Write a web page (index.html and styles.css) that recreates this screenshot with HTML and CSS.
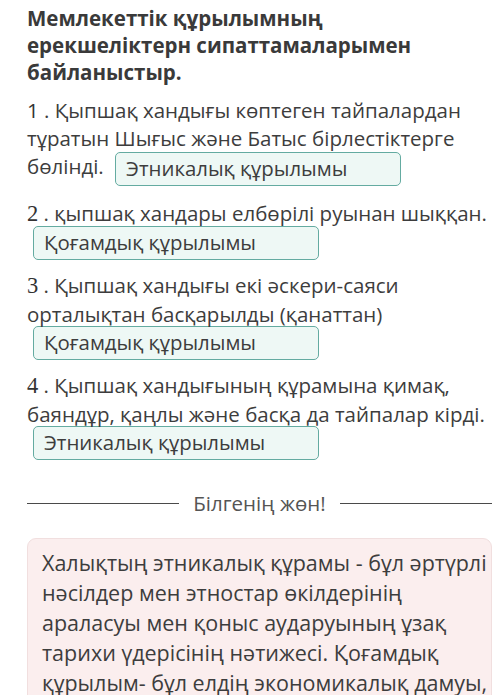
FILE: index.html
```html
<!DOCTYPE html>
<html lang="kk">
<head>
<meta charset="utf-8">
<title>Мемлекеттік құрылым</title>
<link rel="stylesheet" href="styles.css">
</head>
<body>
<main class="page">
  <h1 class="title">Мемлекеттік құрылымның ерекшеліктерн сипаттамаларымен байланыстыр.</h1>

  <p class="item"><span class="num num-sans">1</span> . Қыпшақ хандығы көптеген тайпалардан тұратын Шығыс және Батыс бірлестіктерге бөлінді. <span class="answer answer-inline">Этникалық құрылымы</span></p>

  <div class="item">
    <p class="item-text nowrap"><span class="num">2</span> . қыпшақ хандары елбөрілі руынан шыққан.</p>
    <span class="answer">Қоғамдық құрылымы</span>
  </div>

  <div class="item">
    <p class="item-text"><span class="num">3</span> . Қыпшақ хандығы екі әскери-саяси орталықтан басқарылды (қанаттан)</p>
    <span class="answer">Қоғамдық құрылымы</span>
  </div>

  <div class="item">
    <p class="item-text"><span class="num">4</span> . Қыпшақ хандығының құрамына қимақ, баяндұр, қаңлы және басқа да тайпалар кірді.</p>
    <span class="answer">Этникалық құрылымы</span>
  </div>

  <div class="divider">
    <span class="divider-line"></span>
    <span class="divider-text">Білгенің жөн!</span>
    <span class="divider-line"></span>
  </div>

  <div class="note">
    Халықтың этникалық құрамы - бұл әртүрлі<br>
    нәсілдер мен этностар өкілдерінің<br>
    араласуы мен қоныс аударуының ұзақ<br>
    тарихи үдерісінің нәтижесі. Қоғамдық<br>
    құрылым- бұл елдің экономикалық дамуы,<br>
    әлеуметтік топтары мен таптарының арақатынасы.
  </div>
</main>
</body>
</html>
```

FILE: styles.css
```css
html, body {
  margin: 0;
  padding: 0;
  background: #ffffff;
}

body {
  font-family: "Open Sans", "Noto Sans", "DejaVu Sans", sans-serif;
  color: #3d3d3d;
  overflow: hidden;
}

.page {
  padding: 5px 8px 0 27px;
  width: 500px;
  box-sizing: border-box;
}

.title {
  margin: 0 0 10px 0;
  font-size: 20.5px;
  line-height: 27px;
  font-weight: 700;
  color: #3a3a3a;
  padding-right: 20px;
}

.item {
  margin: 0 0 11px 0;
  font-size: 20.5px;
  line-height: 28px;
}

p.item {
  margin-bottom: 13px;
}

.item-text {
  margin: 0;
}

.nowrap {
  white-space: nowrap;
}

.num {
  font-family: "Liberation Serif", "DejaVu Serif", serif;
  font-size: 22.5px;
  color: #333;
}

.num-sans {
  font-family: "Open Sans", sans-serif;
  font-size: 20.5px;
}

.answer {
  display: block;
  box-sizing: border-box;
  width: 286px;
  height: 34px;
  margin: -2px 0 0 6px;
  padding: 0 0 0 10px;
  background: #eef8f5;
  border: 1.5px solid #64aba1;
  border-radius: 5px;
  line-height: 30px;
  font-size: 20.4px;
  color: #3d3d3d;
  white-space: nowrap;
}

.answer-inline {
  display: inline-block;
  margin: 0 0 0 6px;
  vertical-align: middle;
}

.divider {
  display: flex;
  align-items: center;
  gap: 14px;
  margin-top: 31px;
  height: 24px;
}

.divider-line {
  flex: 1;
  height: 1px;
  background: #4a4a4a;
}

.divider-text {
  font-size: 20.5px;
  color: #555555;
}

.note {
  margin-top: 23px;
  padding: 9px 10px 20px 14px;
  background: #fbeeee;
  border: 1px solid #f1dfdf;
  border-radius: 9px;
  font-size: 21.5px;
  line-height: 30px;
  color: #3d3d3d;
  white-space: nowrap;
  overflow: hidden;
}
```
